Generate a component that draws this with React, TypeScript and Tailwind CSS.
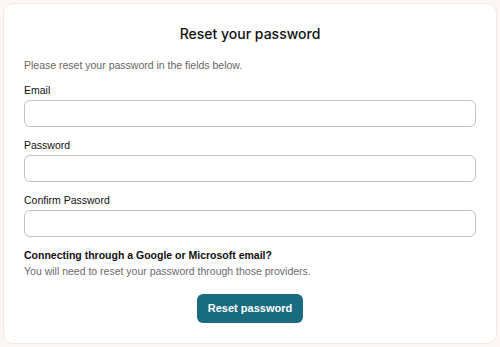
export default function App() {
  return (
    <div className="min-h-[347px] w-[500px] bg-[#fcf7f5] p-[3px] font-['Liberation_Sans',Arial,sans-serif]">
      <div className="flex h-[341px] flex-col rounded-[10px] border border-[#f3e9e5] bg-white px-5 pt-[20px]">
        <h1 className="text-center font-['Inter',sans-serif] text-[14px] font-medium leading-5 text-[#111]">
          Reset your password
        </h1>

        <p className="mt-[13px] text-[10.5px] leading-4 text-[#666]">
          Please reset your password in the fields below.
        </p>

        {/* Fields */}
        <div className="mt-[9px] flex flex-col gap-[10px]">
          {["Email", "Password", "Confirm Password"].map((label) => (
            <div key={label} className="flex flex-col">
              <label className="text-[10.5px] leading-4 text-[#111]">{label}</label>
              <input
                type={label === "Email" ? "email" : "password"}
                className="mt-[2px] h-[27px] rounded-[6px] border border-[#c2c2c2] bg-white px-2 text-[11px] outline-none"
              />
            </div>
          ))}
        </div>

        <p className="mt-[10px] text-[10.5px] font-semibold leading-4 text-[#111]">
          Connecting through a Google or Microsoft email?
        </p>
        <p className="text-[10.5px] leading-4 text-[#6b6b6b]">
          You will need to reset your password through those providers.
        </p>

        <div className="mt-[15px] flex justify-center">
          <button className="h-[29px] w-[106px] rounded-[6px] bg-[#196b80] text-[11px] font-semibold text-white">
            Reset password
          </button>
        </div>
      </div>
    </div>
  );
}
